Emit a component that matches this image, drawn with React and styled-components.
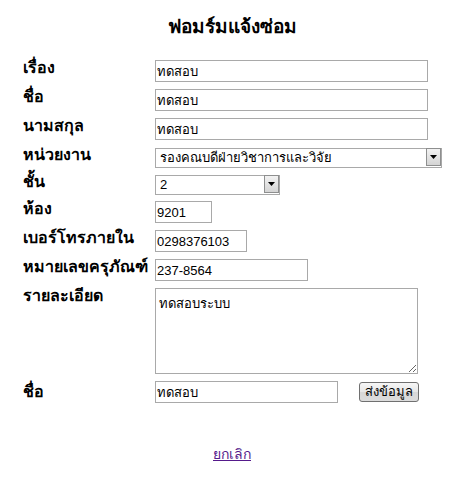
import React from "react";
import styled, { createGlobalStyle } from "styled-components";

const GlobalStyle = createGlobalStyle`
  body {
    margin: 0;
    background: #ffffff;
    font-family: Tahoma, "DejaVu Sans", "Noto Sans", sans-serif;
  }
`;

const fieldFont = `"Liberation Sans", Arial, "DejaVu Sans", sans-serif`;

const Page = styled.div`
  width: 464px;
  height: 482px;
  padding-top: 14px;
  box-sizing: border-box;
`;

const Title = styled.h2`
  margin: 0 0 22px;
  text-align: center;
  font-size: 19px;
  font-weight: bold;
  line-height: 24px;
  color: #000;
`;

const Form = styled.form`
  display: grid;
  grid-template-columns: 132px 1fr;
  row-gap: 7px;
  padding-left: 23px;
`;

const Label = styled.label`
  font-size: 16px;
  font-weight: bold;
  line-height: 20px;
  color: #000;
  white-space: nowrap;
  align-self: ${(p) => (p.center ? "center" : "start")};
  margin-top: ${(p) => (p.center ? "0" : "-2px")};
`;

const Field = styled.div`
  display: flex;
  align-items: center;
  gap: 21px;
`;

const Input = styled.input`
  width: ${(p) => p.w}px;
  height: 22px;
  box-sizing: border-box;
  border: 1px solid #a9a9a9;
  padding: 1px 1px 0;
  font-family: ${fieldFont};
  font-size: 13px;
  color: #000;
  outline: none;
`;

const SelectWrap = styled.div`
  position: relative;
  width: ${(p) => p.w}px;
  height: 20px;
`;

const Select = styled.select`
  appearance: none;
  width: 100%;
  height: 100%;
  box-sizing: border-box;
  border: 1px solid #a9a9a9;
  border-radius: 0;
  background: #fff;
  padding: 0 0 0 4px;
  font-family: ${fieldFont};
  font-size: 13px;
  color: #000;
  outline: none;
`;

const Arrow = styled.span`
  position: absolute;
  top: 1px;
  right: 1px;
  width: 15px;
  height: 18px;
  box-sizing: border-box;
  border: 1px solid #8e8f8f;
  background: linear-gradient(#f2f2f2, #d4d4d4);
  display: flex;
  align-items: center;
  justify-content: center;
  pointer-events: none;
`;

const TextArea = styled.textarea`
  width: 263px;
  height: 86px;
  box-sizing: border-box;
  border: 1px solid #a9a9a9;
  padding: 4px 3px;
  font-family: ${fieldFont};
  font-size: 13px;
  color: #000;
  outline: none;
`;

const Button = styled.button`
  width: 60px;
  height: 20px;
  box-sizing: border-box;
  border: 1px solid #707070;
  border-radius: 3px;
  background: linear-gradient(#f6f6f6 0%, #e6e6e6 50%, #d7d7d7 51%, #dcdcdc 100%);
  padding: 0;
  font-family: ${fieldFont};
  font-size: 13px;
  line-height: 16px;
  color: #000;
  overflow: visible;
`;

const Footer = styled.div`
  margin-top: 40px;
  text-align: center;
`;

const CancelLink = styled.a`
  font-size: 14px;
  color: #551a8b;
  text-decoration: underline;
  cursor: pointer;
`;

const ArrowIcon = () => (
  <Arrow>
    <svg width="7" height="4" viewBox="0 0 7 4">
      <polygon points="0,0 7,0 3.5,4" fill="#000" />
    </svg>
  </Arrow>
);

const App = () => {
  return (
    <Page>
      <GlobalStyle />
      <Title>ฟอมร์มแจ้งซ่อม</Title>
      <Form onSubmit={(e) => e.preventDefault()}>
        <Label>เรื่อง</Label>
        <Field><Input w={273} defaultValue="ทดสอบ" /></Field>

        <Label>ชื่อ</Label>
        <Field><Input w={273} defaultValue="ทดสอบ" /></Field>

        <Label>นามสกุล</Label>
        <Field><Input w={273} defaultValue="ทดสอบ" /></Field>

        <Label>หน่วยงาน</Label>
        <Field>
          <SelectWrap w={287}>
            <Select defaultValue="vp">
              <option value="vp">รองคณบดีฝ่ายวิชาการและวิจัย</option>
            </Select>
            <ArrowIcon />
          </SelectWrap>
        </Field>

        <Label>ชั้น</Label>
        <Field>
          <SelectWrap w={125}>
            <Select defaultValue="2">
              <option value="1">1</option>
              <option value="2">2</option>
              <option value="3">3</option>
            </Select>
            <ArrowIcon />
          </SelectWrap>
        </Field>

        <Label>ห้อง</Label>
        <Field><Input w={57} defaultValue="9201" /></Field>

        <Label>เบอร์โทรภายใน</Label>
        <Field><Input w={92} defaultValue="0298376103" /></Field>

        <Label>หมายเลขครุภัณฑ์</Label>
        <Field><Input w={153} defaultValue="237-8564" /></Field>

        <Label>รายละเอียด</Label>
        <Field><TextArea defaultValue="ทดสอบระบบ" /></Field>

        <Label center>ชื่อ</Label>
        <Field>
          <Input w={183} defaultValue="ทดสอบ" />
          <Button type="submit">ส่งข้อมูล</Button>
        </Field>
      </Form>
      <Footer>
        <CancelLink>ยกเลิก</CancelLink>
      </Footer>
    </Page>
  );
};

export default App;
